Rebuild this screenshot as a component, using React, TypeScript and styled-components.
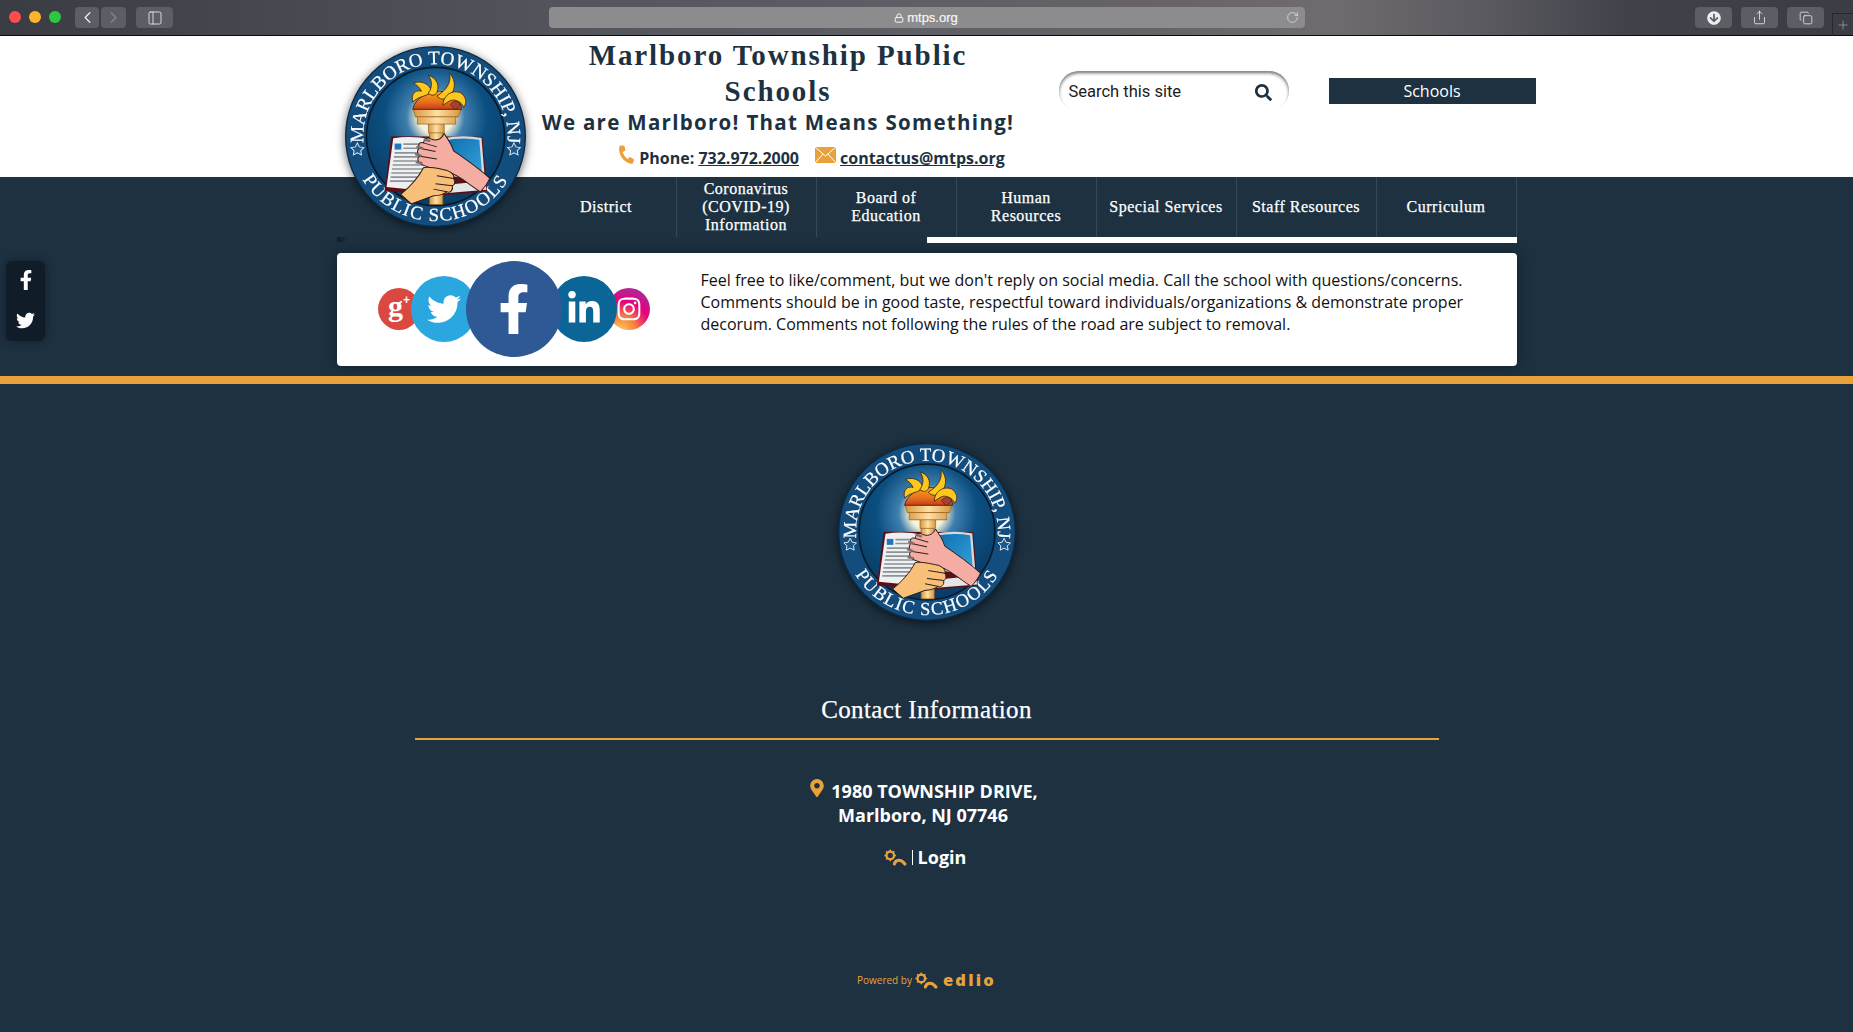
import { useId } from "react";
import styled, { createGlobalStyle } from "styled-components";
import { ChevronLeft, ChevronRight, Copy, Lock, PanelLeft, Plus, RotateCw, Share } from "lucide-react";
import {
  FaArrowCircleDown,
  FaFacebookF,
  FaInstagram,
  FaLinkedinIn,
  FaMapMarkerAlt,
  FaPhone,
  FaSearch,
  FaTwitter,
} from "react-icons/fa";

/* colours */
const NAVY = "#1d3141";
const ORANGE = "#e9a23b";

const GlobalStyle = createGlobalStyle`
  html, body {
    margin: 0;
    padding: 0;
    height: 1032px;
    overflow: hidden;
    background: ${NAVY};
    font-family: "Open Sans", "Liberation Sans", sans-serif;
  }
`;

/* browser chrome */
const Toolbar = styled.div`
  border-bottom: 1px solid #0b0b0d;
  display: flex;
  align-items: flex-start;
  padding: 7px 0 0 9px;
  height: 28px;
  background: linear-gradient(90deg, #3a3c43 0%, #4b4c54 20%, #54555d 32%, #5f5f66 50%, #666267 62%, #6f6b6f 72%, #5b5a60 80%, #3f4249 88%, #3a3d44 100%);
`;

const Lights = styled.div`
  display: flex;
  gap: 8px;
  margin: 4px 14px 0 0;
`;

const Light = styled.span<{ $color: string }>`
  width: 12px;
  height: 12px;
  border-radius: 50%;
  background: ${(p) => p.$color};
`;

const ChromeButton = styled.div<{ $width: number; $dim?: boolean }>`
  width: ${(p) => p.$width}px;
  height: 21px;
  border-radius: 4px;
  background: #5c5e66;
  color: ${(p) => (p.$dim ? "#85878e" : "#eceded")};
  display: flex;
  align-items: center;
  justify-content: center;
`;

const NavButtons = styled.div`
  display: flex;
  gap: 2px;
  margin-right: 10px;
`;

const AddressBar = styled.div`
  width: 756px;
  height: 21px;
  margin-left: 376px;
  border-radius: 4px;
  background: #8c8b8e;
  color: #f6f6f6;
  font: 13px "Liberation Sans", sans-serif;
  -webkit-text-stroke: 0.2px #f6f6f6;
  display: flex;
  align-items: center;
  justify-content: center;
  gap: 3px;
  padding-right: 2px;
  box-sizing: border-box;
  position: relative;
`;

const Reload = styled(RotateCw)`
  position: absolute;
  right: 6px;
  top: 4px;
  color: #dedede;
`;

const RightButtons = styled.div`
  display: flex;
  gap: 9px;
  margin-left: auto;
`;

const NewTab = styled.div`
  width: 20px;
  height: 22px;
  margin: 6px 0 0 8px;
  border: 1px solid #26282d;
  border-width: 1px 0 0 1px;
  color: #a9abb0;
  display: flex;
  align-items: center;
  justify-content: center;
`;

/* header */
const HeaderBar = styled.header`
  height: 141px;
  background: #fff;
  position: relative;
  z-index: 2;
`;

const HeaderInner = styled.div`
  width: 1180px;
  margin: 0 auto;
  display: flex;
  align-items: flex-start;
`;

const LogoSlot = styled.div`
  width: 203px;
  flex: none;
  padding: 10px 0 0 8px;
  box-sizing: border-box;
  height: 141px;
`;

const Brand = styled.div`
  width: 477px;
  flex: none;
  text-align: center;
  color: ${NAVY};
`;

const SiteName = styled.h1`
  margin: 0;
  padding-top: 1px;
  font: 700 29px/36px "Liberation Serif", serif;
  letter-spacing: 1.9px;
`;

const Tagline = styled.div`
  font-weight: 700;
  font-size: 20.5px;
  line-height: 26px;
  letter-spacing: 1.3px;
  white-space: nowrap;
`;

const ContactRow = styled.div`
  display: flex;
  justify-content: center;
  align-items: center;
  gap: 16px;
  margin-top: 11px;
  font-weight: 700;
  font-size: 16px;
  line-height: 24px;
  padding-left: 67px;
  white-space: nowrap;
`;

const ContactItem = styled.span`
  display: flex;
  align-items: center;
  gap: 4px;
  a {
    color: ${NAVY};
    text-decoration: underline;
  }
`;

const PhoneIcon = styled(FaPhone)`
  color: ${ORANGE};
  transform: translateY(-4px) scaleX(-1) rotate(-10deg);
`;

const MailIcon = styled.svg`
  transform: translateY(-3px);
`;

const SearchBox = styled.div`
  width: 230px;
  height: 40px;
  flex: none;
  margin: 35px 0 0 42px;
  box-sizing: border-box;
  padding: 2px 17px 0 10px;
  border-radius: 20px;
  box-shadow: inset 0 2px 2px #8b8b8b, inset 1px 3px 3px #d8d8d8, inset -1px 3px 3px #d8d8d8;
  display: flex;
  align-items: center;
  justify-content: space-between;
  font: 16.5px/26px Roboto, "Liberation Sans", sans-serif;
  color: #1c1c1c;
  svg {
    color: ${NAVY};
  }
`;

const SchoolsButton = styled.div`
  width: 207px;
  height: 26px;
  flex: none;
  margin: 42px -19px 0 40px;
  background: ${NAVY};
  color: #fff;
  font-size: 16px;
  line-height: 26px;
  text-align: center;
`;

/* navigation */
const NavSection = styled.div`
  width: 1180px;
  margin: 0 auto;
`;

const NavRow = styled.nav`
  height: 60px;
  margin-left: 200px;
  display: grid;
  grid-template-columns: repeat(7, 140px);
`;

const NavItem = styled.a`
  display: flex;
  align-items: center;
  justify-content: center;
  text-align: center;
  padding: 0 8px;
  color: #fff;
  font: 16px/18px "Liberation Serif", serif;
  letter-spacing: 0.5px;
  -webkit-text-stroke: 0.25px #fff;
  border-right: 1px solid #33485a;
`;

const NavFoot = styled.div`
  height: 6px;
  display: flex;
  justify-content: space-between;
`;

const Stub = styled.div`
  width: 11px;
  height: 5px;
  background: linear-gradient(90deg, #101c27, ${NAVY});
`;

const Underline = styled.div`
  width: 590px;
  background: #fff;
`;

/* social notice */
const NoticeCard = styled.section`
  width: 1180px;
  height: 113px;
  margin: 10px auto 0;
  background: #fff;
  border-radius: 4px;
  box-shadow: 0 0 14px rgba(10, 20, 30, 0.55);
  display: flex;
  align-items: center;
`;

const SocialCluster = styled.div`
  width: 364px;
  flex: none;
  display: flex;
  align-items: center;
  padding-left: 41px;
  box-sizing: border-box;
  margin-top: -2px;
`;

const Bubble = styled.div<{ $size: number; $bg: string; $layer: number; $overlap?: number }>`
  width: ${(p) => p.$size}px;
  height: ${(p) => p.$size}px;
  flex: none;
  border-radius: 50%;
  background: ${(p) => p.$bg};
  color: #fff;
  display: flex;
  align-items: center;
  justify-content: center;
  position: relative;
  z-index: ${(p) => p.$layer};
  margin-left: ${(p) => -(p.$overlap ?? 0)}px;
`;

const GooglePlus = styled.span`
  font: 700 30px/30px "Liberation Serif", serif;
  margin-top: -5px;
  margin-left: 1px;
  sup {
    font: 700 12px/12px "Liberation Sans", sans-serif;
    vertical-align: 12px;
  }
`;

const NoticeText = styled.p`
  margin: -15px 0 0;
  font-size: 16px;
  line-height: 22px;
  color: #111;
  width: 780px;
`;

const SideShare = styled.div`
  position: absolute;
  left: 6px;
  top: 261px;
  width: 39px;
  height: 80px;
  border-radius: 6px;
  background: #101d28;
  box-shadow: 0 0 8px rgba(10, 18, 26, 0.6);
  display: flex;
  flex-direction: column;
  align-items: center;
  justify-content: space-between;
  padding: 9px 0 11px;
  box-sizing: border-box;
  color: #fff;
`;

const AccentBar = styled.div`
  height: 8px;
  margin-top: 10px;
  background: ${ORANGE};
`;

/* footer */
const Footer = styled.footer`
  display: flex;
  flex-direction: column;
  align-items: center;
  padding-top: 59px;
  color: #fff;
`;

const ContactTitle = styled.h2`
  margin: 73px 0 0;
  font: 400 25px/32px "Liberation Serif", serif;
  letter-spacing: 0.38px;
  -webkit-text-stroke: 0.25px #fff;
`;

const Rule = styled.div`
  width: 1024px;
  height: 2px;
  margin-top: 12px;
  background: ${ORANGE};
`;

const Address = styled.div`
  margin-top: 39px;
  padding-right: 7px;
  font-weight: 700;
  font-size: 18px;
  line-height: 24px;
  text-align: center;
`;

const PinIcon = styled(FaMapMarkerAlt)`
  color: ${ORANGE};
  margin-right: 5px;
  vertical-align: 1px;
`;

const LoginRow = styled.div`
  display: flex;
  align-items: center;
  gap: 5px;
  margin-top: 18px;
  padding-right: 3px;
  font-weight: 700;
  font-size: 18px;
  line-height: 24px;
`;

const LoginDivider = styled.span`
  width: 1px;
  height: 15px;
  background: #fff;
`;

const Powered = styled.div`
  display: flex;
  align-items: center;
  gap: 3px;
  margin-top: 102px;
  color: ${ORANGE};
  font-size: 10px;
`;

const EdlioWord = styled.span`
  font: 800 16.5px/18px "Open Sans", sans-serif;
  letter-spacing: 2.2px;
  margin-left: 2px;
`;

const EdlioMark = ({ width, height }: { width: number; height: number }) => (
  <svg width={width} height={height} viewBox="0 0 22 16" fill="none" stroke={ORANGE}>
    <circle cx="6" cy="6" r="3.6" strokeWidth="2.2" />
    <path d="M6 .4 V2 M6 10 V11.6 M.4 6 H2 M10 6 H11.6 M2 2 L3.2 3.2 M10 2 L8.8 3.2 M2 10 L3.2 8.8" strokeWidth="1.4" />
    <path d="M10 14.2 C11 10 16 9 20 14.2" strokeWidth="3" strokeLinecap="round" />
  </svg>
);

/* seal, drawn with the geometry of the school logo */
const Seal = ({ size }: { size: number }) => {
  const id = useId().replace(/[^a-z0-9]/gi, "");
  return (
    <svg width={size} height={size} viewBox="48 37 540 540" style={{ display: "block", overflow: "visible", filter: "drop-shadow(0 2px 5px rgba(0,0,0,.6))" }}>
      <defs>
        <radialGradient id={`${id}glow`} cx="50%" cy="36%" r="62%">
          <stop offset="0" stopColor="#fffbe0" />
          <stop offset="0.2" stopColor="#f4f2d8" />
          <stop offset="0.34" stopColor="#3f7fae" />
          <stop offset="0.6" stopColor="#0b4f80" />
          <stop offset="1" stopColor="#0a3c66" />
        </radialGradient>
        <linearGradient id={`${id}gold`} x1="0" x2="1" y1="0" y2="0">
          <stop offset="0" stopColor="#d8963c" />
          <stop offset="0.5" stopColor="#fde0a6" />
          <stop offset="1" stopColor="#d8963c" />
        </linearGradient>
        <linearGradient id={`${id}fire`} x1="0" x2="0" y1="0" y2="1">
          <stop offset="0" stopColor="#f7a51f" />
          <stop offset="0.6" stopColor="#e8701c" />
          <stop offset="1" stopColor="#c63c1a" />
        </linearGradient>
        <linearGradient id={`${id}page`} x1="0" x2="1" y1="0" y2="1">
          <stop offset="0" stopColor="#0c6cae" />
          <stop offset="1" stopColor="#38a6dc" />
        </linearGradient>
        <path id={`${id}top`} d="M 116 380 A 215 215 0 1 1 520 380" />
        <path id={`${id}bot`} d="M 89 414 A 253 253 0 0 0 547 414" />
      </defs>

      <circle cx="318" cy="307" r="268" fill="#124d7e" stroke="#0d2a42" strokeWidth="4" />
      <circle cx="318" cy="307" r="206" fill={`url(#${id}glow)`} stroke="#071a2a" strokeWidth="5" />

      <text fontFamily="'Liberation Serif', serif" fontSize="57" fill="#fff" stroke="#fff" strokeWidth="0.6">
        <textPath href={`#${id}top`} startOffset="50%" textAnchor="middle">MARLBORO TOWNSHIP, NJ</textPath>
      </text>
      <text fontFamily="'Liberation Serif', serif" fontSize="56" fill="#fff" stroke="#fff" strokeWidth="0.6" letterSpacing="4">
        <textPath href={`#${id}bot`} startOffset="50%" textAnchor="middle">PUBLIC SCHOOLS</textPath>
      </text>
      <path d="M85 326 l6 12 13 2 -9 9 2 13 -12 -6 -12 6 2 -13 -9 -9 13 -2z M552 326 l6 12 13 2 -9 9 2 13 -12 -6 -12 6 2 -13 -9 -9 13 -2z" fill="#1d5a8c" stroke="#dfe8ef" strokeWidth="3" />

      {/* book */}
      <path d="M186 306 L458 308 L472 470 L346 482 L166 470 Z" fill="#5d0f18" />
      <path d="M192 312 Q250 304 306 316 L296 470 L172 458 Z" fill="#eef0f1" />
      <path d="M196 328 h20 v18 h-20z" fill="#1f78c0" />
      <path d="M222 330 h72 M222 342 h72 M196 356 h96 M194 368 h98 M192 380 h98 M190 392 h100 M188 404 h100 M186 416 h100 M184 428 h100 M182 440 h100" stroke="#8d9298" strokeWidth="5" />
      <path d="M340 316 Q400 304 452 314 L462 438 L360 420 Z" fill={`url(#${id}page)`} stroke="#d5dade" strokeWidth="7" />
      <path d="M360 450 L466 440 L470 466 L346 476 Z" fill="#e3e5e6" />

      {/* torch */}
      <rect x="300" y="292" width="40" height="218" fill={`url(#${id}gold)`} stroke="#8a5b22" strokeWidth="2" />
      <path d="M262 270 h118 l-6 -6 h-106z" fill="#b9792c" />
      <path d="M297 268 h47 v28 h-47z" fill={`url(#${id}gold)`} stroke="#8a5b22" strokeWidth="2" />
      <path d="M252 226 H394 L386 248 H378 V270 H264 V248 H258 Z" fill={`url(#${id}gold)`} stroke="#8a5b22" strokeWidth="2" />
      <path d="M258 248 H386" stroke="#a86c28" strokeWidth="3" />

      {/* flame */}
      <path d="M250 226 C254 198 292 170 330 172 C366 172 394 198 396 226 Z" fill={`url(#${id}fire)`} stroke="#3d2414" strokeWidth="2.5" />
      <g fill="#fdc81e" stroke="#3d2414" strokeWidth="2.5">
        <path d="M250 204 C244 180 258 166 276 172 C270 160 262 152 252 148 C276 138 300 150 306 172 C296 188 272 184 250 204 Z" />
        <path d="M296 178 C312 158 306 136 296 124 C320 132 332 152 322 176 C316 186 306 186 296 178 Z" />
        <path d="M322 186 C350 170 366 146 360 118 C382 142 378 176 352 192 C342 198 330 196 322 186 Z" />
        <path d="M340 214 C340 186 366 166 392 176 C408 186 414 206 402 220 C396 204 376 194 362 200 C354 204 346 210 340 214 Z" />
      </g>
      <path d="M362 212 C368 200 384 200 392 208 C392 218 384 224 374 226 C370 220 366 216 362 212 Z" fill="#a8402f" stroke="#3d2414" strokeWidth="2" />

      {/* upper hand */}
      <path
        d="M344 298 C352 312 366 328 372 350 C410 376 450 404 480 432 C474 446 464 460 452 472 C414 448 384 418 348 410 C320 406 290 398 272 388 C262 378 264 368 272 366 C262 358 262 346 270 342 C264 330 272 322 282 326 C284 312 296 308 304 314 C318 320 334 318 344 298 Z"
        fill="#f4aca3"
        stroke="#2b1c1a"
        strokeWidth="3"
      />
      <path d="M272 366 L322 374 M270 342 L318 352 M282 326 L322 338" fill="none" stroke="#2b1c1a" strokeWidth="3" />
      <path d="M264 338 l14 4 M260 360 l14 4 M262 384 l14 2 M286 316 l14 4" stroke="#77706e" strokeWidth="7" strokeLinecap="round" />

      {/* lower hand */}
      <path
        d="M214 480 C240 458 266 432 282 400 C300 396 332 404 352 408 C368 414 376 424 372 432 C378 442 376 452 368 454 C372 466 362 476 352 472 C340 480 326 484 312 484 C296 490 268 500 246 508 Z"
        fill="#f7bf78"
        stroke="#2b1c1a"
        strokeWidth="3"
      />
      <path d="M372 432 L322 424 M368 454 L318 448 M352 472 L312 464" fill="none" stroke="#2b1c1a" strokeWidth="3" />
    </svg>
  );
};

export default function App() {
  return (
    <>
      <GlobalStyle />

      <Toolbar>
        <Lights>
          <Light $color="#fc4d4b" />
          <Light $color="#fdb22d" />
          <Light $color="#2cc83f" />
        </Lights>
        <NavButtons>
          <ChromeButton $width={24}><ChevronLeft size={19} strokeWidth={1.6} /></ChromeButton>
          <ChromeButton $width={25} $dim><ChevronRight size={19} strokeWidth={1.6} /></ChromeButton>
        </NavButtons>
        <ChromeButton $width={37}><PanelLeft size={16} strokeWidth={1.3} /></ChromeButton>
        <AddressBar>
          <Lock size={10} strokeWidth={2.4} />
          mtps.org
          <Reload size={13} strokeWidth={1.5} />
        </AddressBar>
        <RightButtons>
          <ChromeButton $width={37}><FaArrowCircleDown size={14} /></ChromeButton>
          <ChromeButton $width={37}><Share size={15} strokeWidth={1.3} /></ChromeButton>
          <ChromeButton $width={37}><Copy size={14} strokeWidth={1.3} /></ChromeButton>
        </RightButtons>
        <NewTab><Plus size={14} strokeWidth={1.2} /></NewTab>
      </Toolbar>

      <HeaderBar>
        <HeaderInner>
          <LogoSlot><Seal size={181} /></LogoSlot>
          <Brand>
            <SiteName>Marlboro Township Public Schools</SiteName>
            <Tagline>We are Marlboro! That Means Something!</Tagline>
            <ContactRow>
              <ContactItem>
                <PhoneIcon size={17} />
                <span>Phone: <a href="#">732.972.2000</a></span>
              </ContactItem>
              <ContactItem>
                <MailIcon width="21" height="16" viewBox="0 0 21 16">
                  <rect width="21" height="16" fill={ORANGE} />
                  <path d="M0 0 L10.5 9 L21 0 M0 16 L8 7 M21 16 L13 7" fill="none" stroke="#fff" strokeWidth="1" />
                </MailIcon>
                <a href="#">contactus@mtps.org</a>
              </ContactItem>
            </ContactRow>
          </Brand>
          <SearchBox>
            Search this site
            <FaSearch size={17} />
          </SearchBox>
          <SchoolsButton>Schools</SchoolsButton>
        </HeaderInner>
      </HeaderBar>

      <NavSection>
        <NavRow>
          <NavItem>District</NavItem>
          <NavItem>Coronavirus (COVID-19) Information</NavItem>
          <NavItem>Board of Education</NavItem>
          <NavItem>Human Resources</NavItem>
          <NavItem>Special Services</NavItem>
          <NavItem>Staff Resources</NavItem>
          <NavItem>Curriculum</NavItem>
        </NavRow>
        <NavFoot>
          <Stub />
          <Underline />
        </NavFoot>
      </NavSection>

      <NoticeCard>
        <SocialCluster>
          <Bubble $size={42} $bg="#d9493f" $layer={1}><GooglePlus>g<sup>+</sup></GooglePlus></Bubble>
          <Bubble $size={66} $bg="#2aa7df" $layer={2} $overlap={9}><FaTwitter size={34} /></Bubble>
          <Bubble $size={96} $bg="#2f5995" $layer={4} $overlap={11}><FaFacebookF size={50} /></Bubble>
          <Bubble $size={66} $bg="#0b6697" $layer={3} $overlap={11}><FaLinkedinIn size={36} /></Bubble>
          <Bubble
            $size={42}
            $bg="radial-gradient(circle at 30% 105%, #fdd06a 0%, #f9873a 28%, #e6007e 58%, #8b3fa2 100%)"
            $layer={2}
            $overlap={9}
          >
            <FaInstagram size={26} />
          </Bubble>
        </SocialCluster>
        <NoticeText>
          Feel free to like/comment, but we don't reply on social media. Call the school with questions/concerns.
          Comments should be in good taste, respectful toward individuals/organizations &amp; demonstrate proper
          decorum. Comments not following the rules of the road are subject to removal.
        </NoticeText>
      </NoticeCard>

      <SideShare>
        <FaFacebookF size={20} />
        <FaTwitter size={19} />
      </SideShare>

      <AccentBar />

      <Footer>
        <Seal size={178} />
        <ContactTitle>Contact Information</ContactTitle>
        <Rule />
        <Address>
          <PinIcon size={18} />
          1980 TOWNSHIP DRIVE,
          <br />
          Marlboro, NJ 07746
        </Address>
        <LoginRow>
          <EdlioMark width={23} height={17} />
          <LoginDivider />
          Login
        </LoginRow>
        <Powered>
          Powered by
          <EdlioMark width={23} height={17} />
          <EdlioWord>edlio</EdlioWord>
        </Powered>
      </Footer>
    </>
  );
}
